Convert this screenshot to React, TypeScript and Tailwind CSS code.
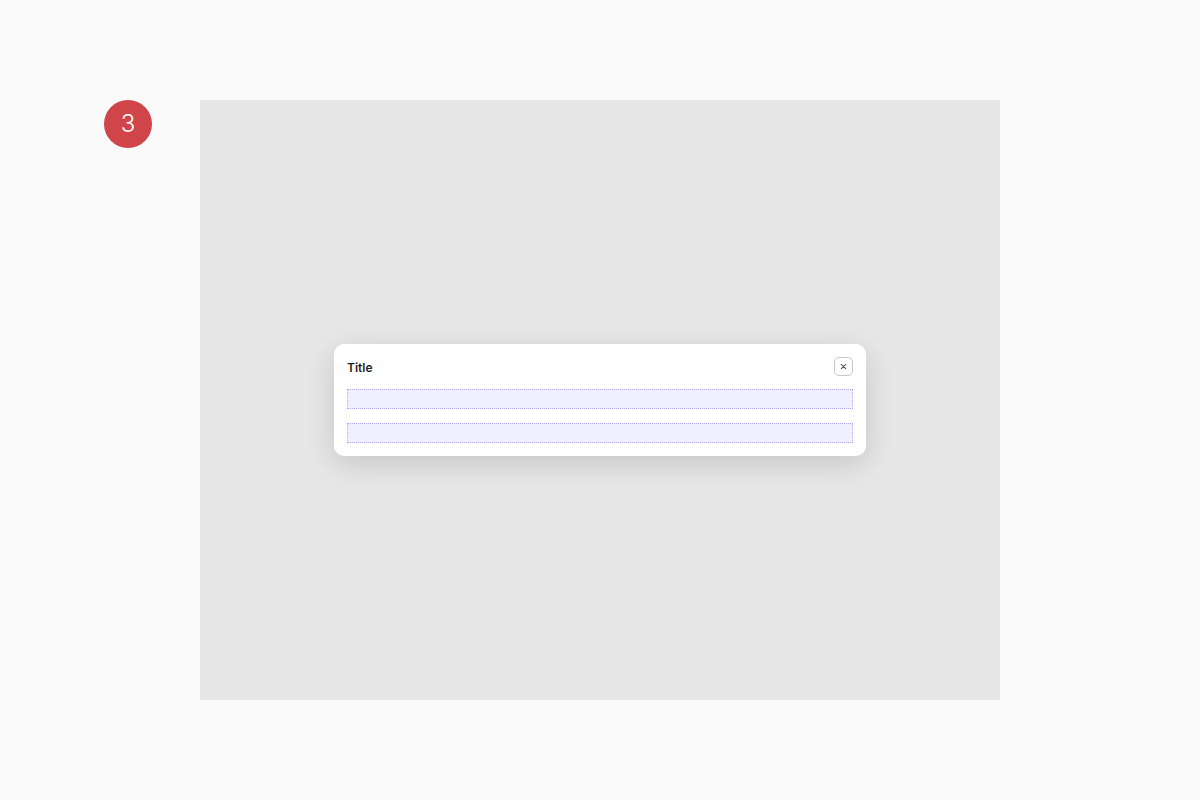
import React from "react";

export default function App() {
  return (
    <div className="w-[1200px] h-[800px] bg-[#fafafa] relative font-['Inter',sans-serif]">
      <div className="absolute left-[104px] top-[100px] w-[48px] h-[48px] rounded-full bg-[#d0454a] flex items-center justify-center text-white text-[24px] font-light">
        3
      </div>
      <div className="absolute left-[200px] top-[100px] w-[800px] h-[600px] bg-[#e7e7e7] flex items-center justify-center">
        <div className="w-[532px] bg-white rounded-[10px] shadow-[0_8px_30px_rgba(0,0,0,0.15)] p-[13px] flex flex-col">
          <div className="flex items-center justify-between h-[19px]">
            <span className="text-[12px] font-semibold text-[#1f1f23] pt-[2px]">Title</span>
            <button className="w-[19px] h-[19px] rounded-[5px] border border-[#c8c8cc] flex items-center justify-center">
              <svg width="7" height="7" viewBox="0 0 8 8" fill="none" stroke="#555" strokeWidth="1.2" strokeLinecap="round">
                <path d="M1.5 1.5L6.5 6.5M6.5 1.5L1.5 6.5" />
              </svg>
            </button>
          </div>
          <div className="mt-[13px] h-[20px] bg-[#f0efff] border border-dotted border-[#b0abea]" />
          <div className="mt-[14px] h-[20px] bg-[#f0efff] border border-dotted border-[#b0abea]" />
        </div>
      </div>
    </div>
  );
}
